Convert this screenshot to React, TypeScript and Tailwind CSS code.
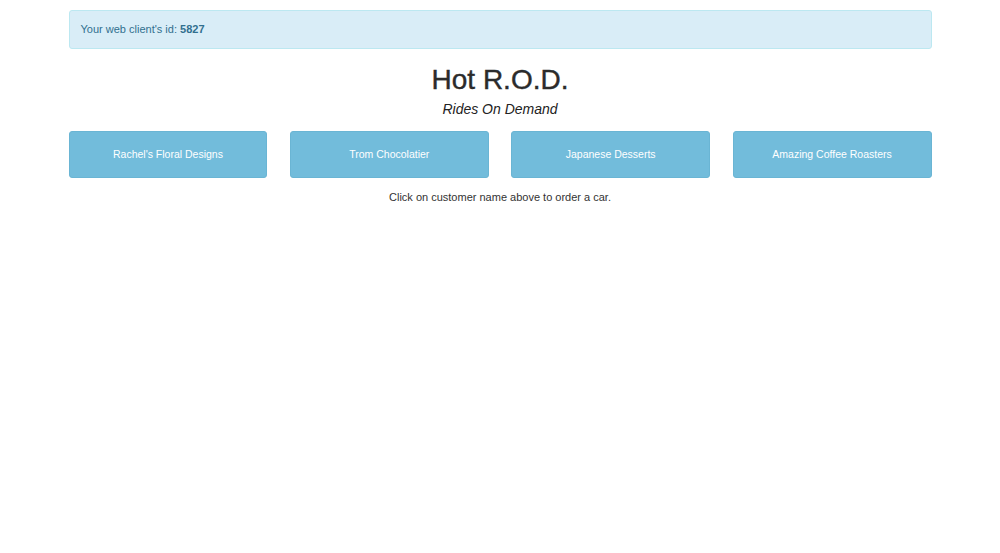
export default function App() {
  const customers = [
    "Rachel's Floral Designs",
    "Trom Chocolatier",
    "Japanese Desserts",
    "Amazing Coffee Roasters",
  ];

  return (
    <div className="min-h-[553px] bg-white font-['Liberation_Sans',Arial,sans-serif] text-[#333]">
      <div className="w-[863px] mx-auto pt-[10px]">
        <div className="h-[39px] flex items-center px-[11px] bg-[#d9edf7] border border-[#bce8f1] rounded-[3px]">
          <p className="text-[11px] text-[#31708f]">
            Your web client's id: <b>5827</b>
          </p>
        </div>

        <div className="text-center">
          <h1 className="mt-[13px] text-[28px] leading-[36px] text-[#2b2b2b] [-webkit-text-stroke:0.4px_#2b2b2b]">Hot R.O.D.</h1>
          <p className="mt-[2px] text-[14px] leading-[18px] italic text-[#222]">Rides On Demand</p>
        </div>

        <div className="mt-[13px] grid grid-cols-4 gap-[22.5px]">
          {customers.map((name) => (
            <button
              key={name}
              className="h-[47px] rounded-[3px] bg-[#72bcdb] border border-[#6ab5d4] text-white text-[10.5px]"
            >
              {name}
            </button>
          ))}
        </div>

        <p className="mt-[11px] text-center text-[11px] text-[#333]">
          Click on customer name above to order a car.
        </p>
      </div>
    </div>
  );
}
